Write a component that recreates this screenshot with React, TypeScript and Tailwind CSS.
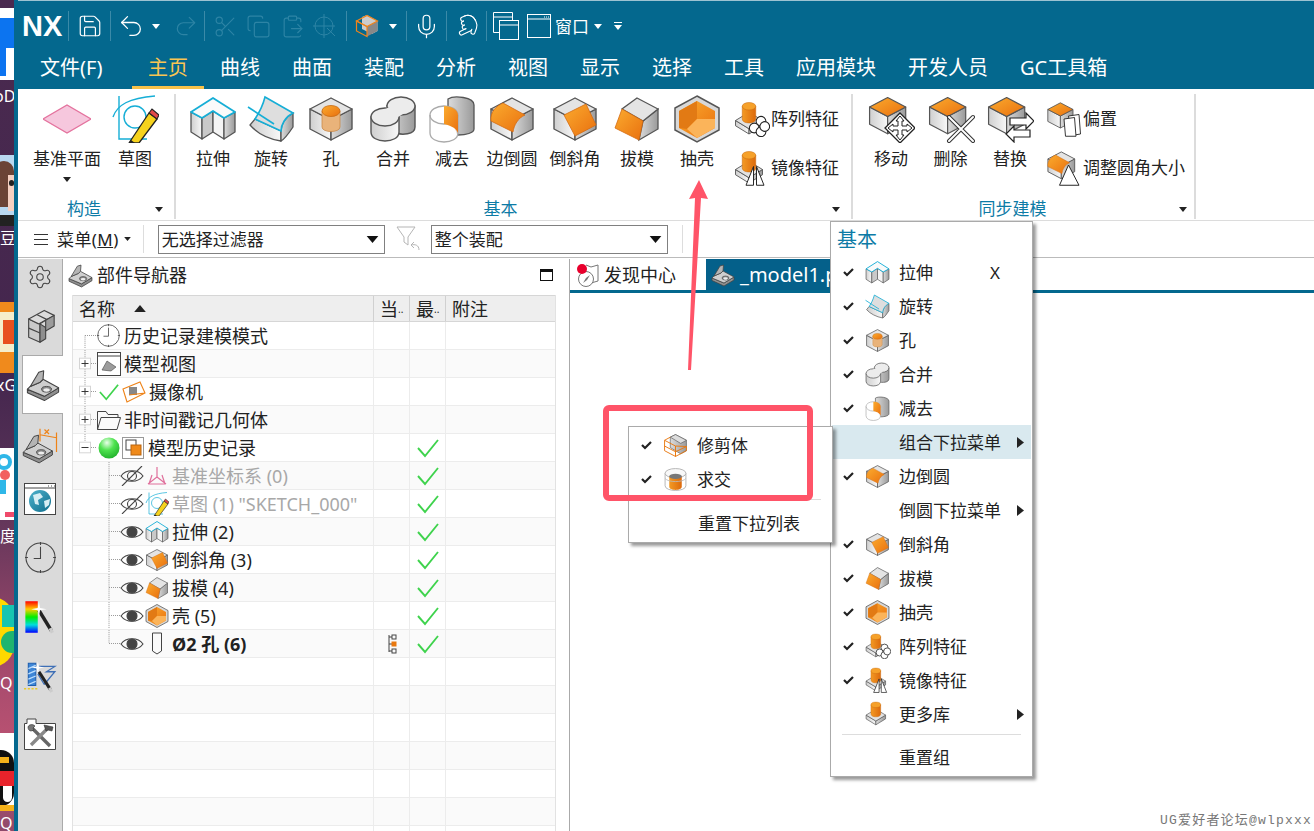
import React from 'react';
import { Settings, Save, Undo2, Redo2, Scissors, Copy, ClipboardPaste, Mic, Pointer } from 'lucide-react';

type P = { s?: number };
const O = '#555';
const Svg = ({ s = 48, children, w }: { s?: number; w?: number; children: React.ReactNode }) => (
  <svg width={w ?? s} height={s} viewBox="0 0 48 48" className="shrink-0">{children}</svg>
);

const Defs = () => (
  <svg className="absolute w-0 h-0">
    <defs>
      <linearGradient id="gl" x1="0" x2="1" y1="0" y2="0"><stop offset="0" stopColor="#cfcfcf" /><stop offset="1" stopColor="#f8f8f8" /></linearGradient>
      <linearGradient id="gr" x1="0" x2="1" y1="0" y2="0"><stop offset="0" stopColor="#dcdcdc" /><stop offset="1" stopColor="#9a9a9a" /></linearGradient>
      <linearGradient id="go" x1="0" x2="1" y1="0" y2="1"><stop offset="0" stopColor="#fbab2e" /><stop offset="1" stopColor="#e9700f" /></linearGradient>
      <linearGradient id="gc" x1="0" x2="1" y1="0" y2="0"><stop offset="0" stopColor="#f39a24" /><stop offset="1" stopColor="#dd6a0c" /></linearGradient>
      <radialGradient id="ball" cx="0.4" cy="0.25" r="0.8"><stop offset="0" stopColor="#e8ffe8" /><stop offset="0.45" stopColor="#4fe34f" /><stop offset="1" stopColor="#1fae2a" /></radialGradient>
      <linearGradient id="rb" x1="0" x2="0" y1="0" y2="1"><stop offset="0" stopColor="#f00" /><stop offset="0.25" stopColor="#fc0" /><stop offset="0.5" stopColor="#0e0" /><stop offset="0.75" stopColor="#0dd" /><stop offset="1" stopColor="#00f" /></linearGradient>
      <linearGradient id="gg" x1="0" x2="1" y1="0" y2="1"><stop offset="0" stopColor="#4fb2cc" /><stop offset="1" stopColor="#0e6d8c" /></linearGradient>
    </defs>
  </svg>
);

const Cube = ({ top = '#e4e4e4' }: { top?: string }) => (
  <g stroke={O} strokeWidth="1.4" strokeLinejoin="round">
    <polygon points="3,34 3,14 24,25 24,45" fill="url(#gl)" />
    <polygon points="45,34 45,14 24,25 24,45" fill="url(#gr)" />
    <polygon points="24,3 45,14 24,25 3,14" fill={top} />
  </g>
);
const Extrude = ({ s }: P) => (
  <Svg s={s}>
    <g stroke={O} strokeWidth="1.3" strokeLinejoin="round">
      <polygon points="2,17 13,23 13,44 2,37" fill="url(#gl)" />
      <polygon points="13,23 24,16 24,37 13,44" fill="#c9c9c9" />
      <polygon points="24,16 35,23 35,44 24,37" fill="#f4f4f4" />
      <polygon points="35,23 46,17 46,37 35,44" fill="url(#gr)" />
    </g>
    <polygon points="2,17 24,3 46,17 35,23 24,16 13,23" fill="#fafafa" stroke="#16aed6" strokeWidth="1.8" strokeLinejoin="round" />
  </Svg>
);
const Revolve = ({ s }: P) => (
  <Svg s={s}>
    <path d="M8 24 L34 36 L34 46 C22 44 10 38 3 30Z" fill="url(#gl)" stroke={O} strokeWidth="1.3" />
    <path d="M46 18 L46 32 C42 38 38 44 34 46 L34 36 C34 30 38 22 46 18Z" fill="url(#gr)" stroke={O} strokeWidth="1.3" />
    <path d="M18 2 L46 18 C38 22 34 30 34 36 L8 24 C12 18 16 10 18 2Z" fill="#dedede" stroke="#16aed6" strokeWidth="1.6" />
    <line x1="1" y1="12" x2="27" y2="29" stroke="#16aed6" strokeWidth="1.6" />
  </Svg>
);
const Hole = ({ s }: P) => (
  <Svg s={s}>
    <Cube />
    <path d="M15 16 L15 32 C15 38 33 38 33 32 L33 16Z" fill="#e9b37a" stroke="#c98a4a" strokeWidth="0.8" />
    <ellipse cx="24" cy="16" rx="9" ry="5.5" fill="url(#go)" stroke="#c86a10" strokeWidth="0.8" />
  </Svg>
);
const Unite = ({ s }: P) => (
  <Svg s={s}>
    <g stroke={O} strokeWidth="1.4">
      <path d="M18 11 L46 11 L46 32 C46 40 32 40 28 38Z" fill="url(#gr)" />
      <ellipse cx="32" cy="11" rx="14" ry="9" fill="#ececec" />
      <path d="M2 22 L2 37 C2 49 30 49 30 37 L30 22Z" fill="url(#gl)" />
      <ellipse cx="16" cy="22" rx="14" ry="9" fill="#ececec" />
    </g>
    <path d="M16 14 L28 9 L34 19 L29 22 L16 17Z" fill="#ececec" />
  </Svg>
);
const Subtract = ({ s }: P) => (
  <Svg s={s}>
    <path d="M20 12 L20 4 C26 0 46 2 46 10 L46 34 C46 38 38 40 30 40Z" fill="url(#gr)" stroke={O} strokeWidth="1.3" />
    <path d="M2 20 L2 38 C2 50 30 50 30 38 L30 20" fill="#fff" fillOpacity="0.75" stroke="#aaa" strokeWidth="1.3" />
    <ellipse cx="16" cy="20" rx="14" ry="9" fill="none" stroke="#aaa" strokeWidth="1.3" />
    <path d="M16 11 C24 11 30 15 30 20 L30 38 C28 32 20 30 16 29Z" fill="url(#go)" />
  </Svg>
);
const Blend = ({ s }: P) => (
  <Svg s={s}>
    <Cube />
    <path d="M3 26 C2 17 8 11 15 8 L37 20 C30 23 26 30 25 37Z" fill="url(#go)" stroke="#d46a10" strokeWidth="0.8" />
  </Svg>
);
const Chamfer = ({ s }: P) => (
  <Svg s={s}>
    <Cube />
    <polygon points="13,20 35,9 45,30 24,41" fill="url(#go)" stroke="#d46a10" strokeWidth="0.8" />
  </Svg>
);
const Draft = ({ s }: P) => (
  <Svg s={s}>
    <polygon points="45,14 45,34 26,45 30,26" fill="url(#gr)" stroke={O} strokeWidth="1.3" />
    <polygon points="24,3 45,14 30,26 9,14" fill="#e4e4e4" stroke={O} strokeWidth="1.3" />
    <polygon points="9,14 30,26 26,45 2,33" fill="url(#go)" stroke="#d46a10" strokeWidth="0.8" />
  </Svg>
);
const Shell = ({ s }: P) => (
  <Svg s={s}>
    <polygon points="24,1 46,13 46,35 24,47 2,35 2,13" fill="#d8d8d8" stroke={O} strokeWidth="1.5" />
    <polygon points="24,6 42,16 42,33 24,43 6,33 6,16" fill="url(#go)" />
    <polygon points="6,16 24,6 24,24 14,34 6,33" fill="#e27a14" />
    <polygon points="14,34 24,24 42,24 42,33 24,43" fill="#fbb45a" />
  </Svg>
);
const Base = () => (
  <g>
    <g stroke={O} strokeWidth="1.2" strokeLinejoin="round">
      <polygon points="2,26 2,33 20,44 20,37" fill="url(#gl)" />
      <polygon points="38,26 38,33 20,44 20,37" fill="url(#gr)" />
      <polygon points="2,26 20,15 38,26 20,37" fill="#e2e2e2" />
    </g>
    <path d="M11 7 L11 24 C11 31 29 31 29 24 L29 7Z" fill="url(#gc)" stroke="#c86a10" strokeWidth="0.7" />
    <ellipse cx="20" cy="7" rx="9" ry="5" fill="#f6a12a" stroke="#c86a10" strokeWidth="0.7" />
  </g>
);
const Library = ({ s }: P) => <Svg s={s}><Base /></Svg>;
const Pattern = ({ s }: P) => (
  <Svg s={s}>
    <Base />
    <g fill="#fff" stroke="#222" strokeWidth="1.4">
      <circle cx="36" cy="27" r="6.5" /><circle cx="27" cy="36" r="6.5" /><circle cx="45" cy="36" r="0" /><circle cx="36" cy="41" r="6.5" /><circle cx="41" cy="34" r="6.5" />
    </g>
  </Svg>
);
const Mirror = ({ s }: P) => (
  <Svg s={s}>
    <Base />
    <g fill="#fff" stroke="#222" strokeWidth="1.3" strokeLinejoin="round">
      <polygon points="26,22 16,47 26,47" /><polygon points="30,22 40,47 30,47" />
    </g>
  </Svg>
);
const MiniCube = () => (
  <g transform="scale(0.86)">
    <Cube top="url(#go)" />
  </g>
);
const MoveI = ({ s }: P) => (
  <Svg s={s}>
    <MiniCube />
    <polygon points="33,18 48,33 33,48 18,33" fill="#fff" stroke="#222" strokeWidth="1.3" />
    <path d="M33 21 L37 26 L35 26 L35 31 L40 31 L40 29 L45 33 L40 37 L40 35 L35 35 L35 40 L37 40 L33 45 L29 40 L31 40 L31 35 L26 35 L26 37 L21 33 L26 29 L26 31 L31 31 L31 26 L29 26Z" fill="#fff" stroke="#222" strokeWidth="1" />
  </Svg>
);
const DeleteI = ({ s }: P) => (
  <Svg s={s}>
    <MiniCube />
    <g strokeLinecap="round">
      <path d="M22 22 L46 46 M46 22 L22 46" stroke="#333" strokeWidth="4" />
      <path d="M22 22 L46 46 M46 22 L22 46" stroke="#fff" strokeWidth="2" />
    </g>
  </Svg>
);
const ReplaceI = ({ s }: P) => (
  <Svg s={s}>
    <MiniCube />
    <path d="M24 23 L40 23 L40 18 L48 26 L40 34 L40 30 L24 30Z" fill="#fff" stroke="#222" strokeWidth="1.2" />
    <path d="M44 35 L28 35 L28 31 L20 39 L28 47 L28 42 L44 42Z" fill="#fff" stroke="#222" strokeWidth="1.2" />
  </Svg>
);
const OffsetI = ({ s }: P) => (
  <Svg s={s}>
    <g transform="scale(0.8)"><Cube top="url(#go)" /></g>
    <path d="M30 20 L44 18 L46 44 L34 46Z" fill="#fff" stroke="#222" strokeWidth="1.2" />
    <path d="M24 24 L38 22 L40 47 L26 47Z" fill="#fff" stroke="#222" strokeWidth="1.2" />
  </Svg>
);
const Blend2 = () => (
  <g>
    <Cube />
    <path d="M3 26 C2 17 8 11 15 8 L37 20 C30 23 26 30 25 37Z" fill="url(#go)" stroke="#d46a10" strokeWidth="0.8" />
  </g>
);
const ResizeI = ({ s }: P) => (
  <Svg s={s}>
    <g transform="scale(0.85)"><Blend2 /></g>
    <polygon points="30,20 18,47 44,47" fill="#fff" stroke="#222" strokeWidth="1.3" strokeLinejoin="round" />
  </Svg>
);
const Trim = ({ s }: P) => (
  <Svg s={s}>
    <polygon points="14,16 14,8 24,3 45,14 45,34 34,40 14,28" fill="url(#gr)" stroke={O} strokeWidth="1.2" />
    <polygon points="14,8 24,3 45,14 34,20" fill="#ddd" stroke={O} strokeWidth="1.2" />
    <g fill="none" stroke="#e9780f" strokeWidth="1.8" strokeLinejoin="round">
      <polygon points="3,14 24,25 24,45 3,34" /><polygon points="24,25 45,26 45,34 24,45" /><line x1="3" y1="25" x2="24" y2="36" /><line x1="24" y1="36" x2="45" y2="26" /><line x1="3" y1="14" x2="14" y2="8" />
    </g>
  </Svg>
);
const Intersect = ({ s }: P) => (
  <Svg s={s}>
    <path d="M4 12 L4 36 C4 48 44 48 44 36 L44 12" fill="#fff" stroke="#aaa" strokeWidth="1.6" />
    <ellipse cx="24" cy="12" rx="20" ry="9" fill="#f8f8f8" stroke="#aaa" strokeWidth="1.6" />
    <path d="M12 18 L12 38 C12 46 36 46 36 38 L36 18Z" fill="url(#gc)" />
    <ellipse cx="24" cy="18" rx="12" ry="5" fill="#777" />
    <path d="M4 22 C10 30 38 30 44 22" fill="none" stroke="#bbb" strokeWidth="1.6" />
  </Svg>
);
const Datum = ({ s = 48 }: P) => (
  <Svg s={s}><polygon points="0,24 24,10 48,24 24,38" fill="#f6c7dd" stroke="#e4739e" strokeWidth="1.4" /></Svg>
);
const Sketch = ({ s = 48 }: P) => (
  <Svg s={s}>
    <g fill="none" stroke="#16aed6" strokeWidth="1.4">
      <path d="M2 22 C6 10 18 3 44 1" />
      <path d="M8 1 L8 44 L36 44" />
      <circle cx="24" cy="22" r="11" />
    </g>
    <path d="M20 45 L38 18 L46 24 L28 48 L18 48Z" fill="#f6d21d" stroke="#222" strokeWidth="1.3" strokeLinejoin="round" />
    <path d="M38 18 L41 14 L48 20 L46 24Z" fill="#e14a4a" stroke="#222" strokeWidth="1.1" />
    <path d="M20 45 L18 48 L24 48Z" fill="#222" />
  </Svg>
);
const BracketBody = () => (
  <g>
    <g stroke="#444" strokeWidth="1.5" strokeLinejoin="round">
      <polygon points="2,30 2,35 26,46 46,34 46,28 26,40" fill="#8f8f8f" />
      <polygon points="2,30 6,26 20,20 24,16 46,28 26,40" fill="#cfcfcf" />
      <polygon points="6,26 18,6 25,4 24,16 20,20" fill="#b4b4b4" />
    </g>
    <ellipse cx="29" cy="30" rx="7" ry="4" fill="#8a8a8a" stroke="#444" strokeWidth="1.2" />
    <ellipse cx="29" cy="31" rx="4.5" ry="2.4" fill="#eee" />
  </g>
);
const Bracket = ({ s = 48 }: P) => <Svg s={s}><BracketBody /></Svg>;
const DimBracket = ({ s = 36 }: P) => (
  <Svg s={s}>
    <g transform="translate(0,6) scale(0.88)"><BracketBody /></g>
    <g stroke="#ee8318" strokeWidth="1.6" fill="none">
      <path d="M24 1 L24 18 M46 6 L46 32 M24 9 L46 13" />
    </g>
    <path d="M30 2 L36 8 M36 2 L30 8" stroke="#ee8318" strokeWidth="1.6" />
  </Svg>
);
const Blocks = ({ s = 36 }: P) => (
  <Svg s={s}>
    <g stroke="#444" strokeWidth="1.6" strokeLinejoin="round">
      <polygon points="8,14 8,40 24,47 24,21" fill="#c9c9c9" />
      <polygon points="24,21 24,47 32,42 32,26" fill="#8f8f8f" />
      <polygon points="8,14 30,2 44,9 22,21" fill="#dcdcdc" />
      <polygon points="32,16 44,9 44,24 32,31" fill="#9b9b9b" />
      <path d="M8 27 L24 34 M20 8 L34 15 M24 21 L32 16" fill="none" />
    </g>
  </Svg>
);
const Clock = ({ s = 32, c = '#444' }: { s?: number; c?: string }) => (
  <svg width={s} height={s} viewBox="0 0 32 32" className="shrink-0" fill="none" stroke={c} strokeWidth="1.1">
    <circle cx="16" cy="16" r="15" />
    <path d="M16 5 L16 17 L9 17 M16 0 L16 3 M16 29 L16 32 M0 16 L3 16 M29 16 L32 16" />
  </svg>
);
const GlobeWin = ({ s = 32 }: P) => (
  <svg width={s} height={s} viewBox="0 0 32 32" className="shrink-0">
    <rect x="0.5" y="0.5" width="31" height="31" fill="#fff" stroke="#444" />
    <line x1="0" y1="5" x2="32" y2="5" stroke="#444" />
    <path d="M24 3 h1 M27 3 h1 M30 3 h1" stroke="#444" />
    <circle cx="16" cy="18" r="11" fill="url(#gg)" />
    <path d="M9 12 L16 10 L19 14 L14 17 L15 22 L11 21Z M20 18 L26 16 L25 22 L21 25Z" fill="#d7eef4" />
  </svg>
);
const WandRainbow = ({ s = 36 }: P) => (
  <svg width={s} height={s} viewBox="0 0 32 32" className="shrink-0">
    <rect x="3" y="2" width="11" height="28" fill="url(#rb)" />
    <path d="M15 10 L26 28" stroke="#222" strokeWidth="3" />
    <path d="M25 26 L27 30" stroke="#ccc" strokeWidth="3" />
    <path d="M15 2 L16 8 L22 9 L16 10 L15 16 L14 10 L8 9 L14 8Z" fill="#fff" />
  </svg>
);
const WandMill = ({ s = 36 }: P) => (
  <svg width={s} height={s} viewBox="0 0 32 32" className="shrink-0">
    <path d="M5 4 L12 4 L12 25 L5 25Z" fill="#3e86d6" stroke="#1f5fb0" />
    <path d="M5 9 L12 6 M5 14 L12 11 M5 19 L12 16 M5 24 L12 21" stroke="#bfe0ff" strokeWidth="1.2" />
    <path d="M13 7 L30 7 L22 12 L30 12 L20 24 M14 14 L20 24" fill="none" stroke="#3e6fb6" strokeWidth="1.2" />
    <path d="M1 28 L14 28" stroke="#e8c92a" strokeWidth="1.5" strokeDasharray="2 1.5" />
    <path d="M15 12 L26 29" stroke="#222" strokeWidth="3" />
    <path d="M25 27 L27 31" stroke="#ccc" strokeWidth="3" />
    <path d="M14 2 L15 7 L20 8 L15 9 L14 14 L13 9 L8 8 L13 7Z" fill="#fff" />
  </svg>
);
const Tools = ({ s = 34 }: P) => (
  <svg width={s} height={s} viewBox="0 0 32 32" className="shrink-0">
    <path d="M0.5 31.5 L0.5 5.5 L3 5.5 L3 1 L12 1 L12 5.5 L31.5 5.5 L31.5 31.5Z" fill="#fff" stroke="#444" />
    <path d="M7 9 L26 28" stroke="#666" strokeWidth="3.4" />
    <path d="M25 9 L7 27" stroke="#888" strokeWidth="3.4" />
    <path d="M4 9 C5 6 9 6 11 8 L9 10 L10 12 L7 13 C5 13 4 11 4 9Z" fill="#777" stroke="#333" strokeWidth="0.6" />
    <path d="M20 7 L29 9 L28 13 L24 12 L22 13Z" fill="#555" stroke="#333" strokeWidth="0.6" />
  </svg>
);
const Eye = ({ off = false }: { off?: boolean }) => (
  <svg width="24" height="20" viewBox="0 0 24 20" className="shrink-0" fill="none" stroke="#444" strokeWidth="1.1">
    <path d="M1 10 C6 3 18 3 23 10 C18 17 6 17 1 10Z" />
    {off ? <circle cx="12" cy="10" r="4.5" /> : <circle cx="12" cy="10" r="5" fill="#444" />}
    {off && <path d="M2 20 L22 0" />}
  </svg>
);
const GreenCheck = ({ s = 22 }: P) => (
  <svg width={s} height={s} viewBox="0 0 22 22" className="shrink-0" fill="none" stroke="#3fd34d" strokeWidth="1.9">
    <path d="M1 11 L8 19 L21 3" />
  </svg>
);
const TinyCheck = () => (
  <svg width="11" height="9" viewBox="0 0 11 9" className="shrink-0"><path d="M1 4 L4 7 L10 1" fill="none" stroke="#222" strokeWidth="2.2" /></svg>
);
const Tri = ({ w = 10, h = 6, c = '#222', cn = '' }: { w?: number; h?: number; c?: string; cn?: string }) => (
  <svg width={w} height={h} viewBox="0 0 10 6" className={`shrink-0 ${cn}`}><polygon points="0,0 10,0 5,6" fill={c} /></svg>
);
const RightTri = () => (
  <svg width="7" height="11" viewBox="0 0 7 11" className="shrink-0"><polygon points="0,0 7,5.5 0,11" fill="#222" /></svg>
);
const Win = ({ s = 24 }: P) => (
  <svg width={s} height={s} viewBox="0 0 24 24" className="shrink-0" fill="none" stroke="#fff" strokeWidth="1">
    <rect x="0.5" y="0.5" width="23" height="23" />
    <line x1="0" y1="5" x2="24" y2="5" />
    <path d="M17 3 h1 M19 3 h1 M21 3 h1" />
  </svg>
);
const TwoWin = () => (
  <svg width="26" height="28" viewBox="0 0 26 28" className="shrink-0" fill="none" stroke="#fff" strokeWidth="1">
    <path d="M13 20.5 H0.5 V0.5 H19.5 V8" />
    <line x1="0" y1="5" x2="20" y2="5" />
    <rect x="6.5" y="8.5" width="19" height="19" fill="#04688e" />
    <line x1="6" y1="13" x2="26" y2="13" />
  </svg>
);
const Sep = () => <div className="w-px h-[30px] bg-[#3b8aa8] shrink-0" />;

const tabs = ['曲线', '曲面', '装配', '分析', '视图', '显示', '选择', '工具', '应用模块', '开发人员', 'GC工具箱'];

const TitleBar = () => (
  <div className="h-[44px] flex items-center border-t border-[#9cc3d2] bg-[#04688e] text-white shrink-0 pt-[7px]">
    <div className="w-[50px] pl-[4px] font-bold text-[29px] leading-none [font-family:'Liberation_Sans',sans-serif]">NX</div>
    <Sep />
    <div className="w-[41px] flex justify-center"><Save size={26} strokeWidth={1.1} /></div>
    <Sep />
    <div className="w-[56px] pl-[6px] flex items-center gap-[7px]"><Undo2 size={28} strokeWidth={1.1} /><Tri w={8} h={5} c="#fff" /></div>
    <div className="w-[37px] flex justify-center text-[#2d84a5]"><Redo2 size={26} strokeWidth={1.1} /></div>
    <Sep />
    <div className="w-[141px] flex items-center justify-around text-[#2d84a5] px-[4px]">
      <Scissors size={25} strokeWidth={1.1} /><Copy size={25} strokeWidth={1.1} /><ClipboardPaste size={25} strokeWidth={1.1} />
      <svg width="25" height="25" viewBox="0 0 25 25" fill="none" stroke="#2d84a5"><circle cx="11" cy="12" r="9" /><path d="M11 0 V24 M0 12 H22 M14 14 L22 22" /></svg>
    </div>
    <Sep />
    <div className="w-[59px] pl-[8px] flex items-center gap-[10px]">
      <svg width="24" height="24" viewBox="0 0 48 48"><polygon points="14,6 24,2 45,14 45,34 34,40 14,30" fill="#ccc" /><polygon points="24,25 45,14 45,34 24,45" fill="#888" /><g fill="none" stroke="#f0841a" strokeWidth="2.4"><polygon points="3,14 24,3 45,14 24,25" /><polygon points="3,14 24,25 24,45 3,34" /></g></svg>
      <Tri w={8} h={5} c="#fff" />
    </div>
    <Sep />
    <div className="w-[39px] flex justify-center"><Mic size={27} strokeWidth={1.1} /></div>
    <Sep />
    <div className="w-[39px] flex justify-center"><Pointer size={24} strokeWidth={1.1} className="-rotate-[115deg]" /></div>
    <Sep />
    <div className="w-[40px] pl-[6px] flex items-center"><TwoWin /></div>
    <Win s={24} />
    <span className="ml-[4px] text-[17px] leading-none">窗口</span>
    <Tri w={8} h={5} c="#fff" cn="ml-[5px]" />
    <div className="ml-[12px] flex flex-col items-center gap-[2px]"><div className="w-[8px] h-px bg-white" /><Tri w={8} h={5} c="#fff" /></div>
  </div>
);

const MenuTabs = () => (
  <div className="h-[45px] flex bg-[#04688e] text-white text-[20px] shrink-0 pl-[22px]">
    <div className="w-[92px] flex items-center pt-[2px]">文件(F)</div>
    <div className="px-4 flex items-center text-[#f9c552] border-b-[3px] border-[#f9c24a] pt-[5px] mt-px">主页</div>
    {tabs.map((t) => <div key={t} className="px-4 flex items-center pt-[2px]">{t}</div>)}
  </div>
);

const BigBtn = ({ icon, label, w, arrow }: { icon: React.ReactNode; label: string; w: string; arrow?: boolean }) => (
  <div className={`flex flex-col items-center ${w}`}>
    <div className="h-[48px] flex items-center justify-center">{icon}</div>
    <div className="mt-[6px] text-[17px] leading-[20px] whitespace-nowrap">{label}</div>
    {arrow && <Tri w={8} h={5} c="#222" cn="mt-[8px]" />}
  </div>
);
const SmallBtn = ({ icon, label }: { icon: React.ReactNode; label: string }) => (
  <div className="flex items-center gap-[1px] h-[38px] whitespace-nowrap text-[17px] leading-[20px]">{icon}<span>{label}</span></div>
);
const GroupFoot = ({ label, cols, pl }: { label: string; cols: string; pl: string }) => (
  <div className={`grid ${cols} ${pl} items-center h-[20px]`}>
    <div className="text-center text-[#0d7ba6] text-[17px] leading-[20px]">{label}</div>
    <div className="flex justify-center"><Tri w={8} h={5} c="#222" /></div>
  </div>
);

const Ribbon = () => (
  <div className="h-[132px] flex bg-white text-[#222] pt-[5px] shrink-0 border-b border-[#dcdcdc]">
    <div className="w-[158px] h-[125px] flex flex-col justify-between border-r-2 border-[#dcdcdc]">
      <div className="flex pl-[15px] pt-[1px]">
        <BigBtn w="w-[68px]" icon={<Datum s={48} />} label="基准平面" arrow />
        <BigBtn w="w-[68px]" icon={<Sketch s={48} />} label="草图" />
      </div>
      <GroupFoot label="构造" cols="grid-cols-[1fr_30px]" pl="pl-[6px]" />
    </div>
    <div className="w-[677px] h-[125px] flex flex-col justify-between border-r-2 border-[#dcdcdc]">
      <div className="flex pl-[8px] pt-[1px]">
        <BigBtn w="w-[58px]" icon={<Extrude />} label="拉伸" />
        <BigBtn w="w-[58px]" icon={<Revolve />} label="旋转" />
        <BigBtn w="w-[62px]" icon={<Hole />} label="孔" />
        <BigBtn w="w-[62px]" icon={<Unite />} label="合并" />
        <BigBtn w="w-[56px]" icon={<Subtract />} label="减去" />
        <BigBtn w="w-[64px]" icon={<Blend />} label="边倒圆" />
        <BigBtn w="w-[62px]" icon={<Chamfer />} label="倒斜角" />
        <BigBtn w="w-[62px]" icon={<Draft />} label="拔模" />
        <BigBtn w="w-[58px]" icon={<Shell />} label="抽壳" />
        <div className="flex flex-col ml-[8px] pt-[5px] gap-[11px]">
          <SmallBtn icon={<Pattern s={36} />} label="阵列特征" />
          <SmallBtn icon={<Mirror s={36} />} label="镜像特征" />
        </div>
      </div>
      <GroupFoot label="基本" cols="grid-cols-[1fr_30px]" pl="pl-[4px]" />
    </div>
    <div className="w-[343px] h-[125px] flex flex-col justify-between border-r-2 border-[#dcdcdc]">
      <div className="flex pl-[8px] pt-[1px]">
        <BigBtn w="w-[60px]" icon={<MoveI />} label="移动" />
        <BigBtn w="w-[59px]" icon={<DeleteI />} label="删除" />
        <BigBtn w="w-[60px]" icon={<ReplaceI />} label="替换" />
        <div className="flex flex-col ml-[6px] pt-[5px] gap-[11px]">
          <SmallBtn icon={<OffsetI s={36} />} label="偏置" />
          <SmallBtn icon={<ResizeI s={36} />} label="调整圆角大小" />
        </div>
      </div>
      <GroupFoot label="同步建模" cols="grid-cols-[1fr_22px]" pl="" />
    </div>
  </div>
);

const Combo = ({ w, label }: { w: string; label: string }) => (
  <div className={`${w} h-[29px] border border-[#808080] flex items-center justify-between pl-[3px] pr-[5px] text-[17px] leading-none text-[#222] bg-white`}>
    <span>{label}</span><Tri w={13} h={7} c="#111" />
  </div>
);

const Toolbar = () => (
  <div className="h-[37px] flex items-center bg-white shrink-0 border-b border-[#bbb] text-[#222]">
    <div className="ml-[16px] w-[14px] flex flex-col gap-[4px]">
      <div className="h-px bg-[#333]" /><div className="h-px bg-[#333]" /><div className="h-px bg-[#333]" />
    </div>
    <span className="ml-[9px] text-[17px] leading-none whitespace-nowrap tracking-[0.4px]">菜单(<span className="underline">M</span>)</span>
    <Tri w={7} h={4} c="#222" cn="ml-[5px]" />
    <div className="ml-[12px] w-px h-[28px] bg-[#ddd]" />
    <div className="ml-[14px]"><Combo w="w-[227px]" label="无选择过滤器" /></div>
    <svg width="26" height="28" viewBox="0 0 26 28" fill="none" stroke="#b5b5b5" className="ml-[10px]">
      <path d="M2 2 L20 2 L13 12 L13 20 L9 17 L9 12Z" />
      <path d="M24 25 C24 20 20 19 16 20 M16 20 L19 17 M16 20 L19 23" />
    </svg>
    <div className="ml-[10px]"><Combo w="w-[237px]" label="整个装配" /></div>
    <div className="ml-[14px] w-px h-[28px] bg-[#ddd]" />
  </div>
);

const Side = () => (
  <div className="w-[45px] bg-[#dadada] border-r border-[#aaa] flex flex-col items-center shrink-0">
    <div className="h-[38px] flex items-center justify-center pb-[3px]"><Settings size={26} strokeWidth={1} className="text-[#444]" /></div>
    <div className="h-[58px] flex items-center justify-center"><Blocks s={34} /></div>
    <div className="h-[59px] w-[42px] ml-[4px] flex items-center justify-center bg-white border border-r-0 border-[#aaa] mr-[-1px]"><Bracket s={34} /></div>
    <div className="h-[64px] flex items-center justify-center"><DimBracket s={36} /></div>
    <div className="h-[42px] flex items-center justify-center"><GlobeWin s={32} /></div>
    <div className="h-[74px] flex items-center justify-center"><Clock s={31} /></div>
    <div className="h-[46px] flex items-center justify-center"><WandRainbow s={36} /></div>
    <div className="h-[72px] flex items-center justify-center"><WandMill s={34} /></div>
    <div className="h-[44px] flex items-center justify-center"><Tools s={32} /></div>
  </div>
);

const PlusBox = ({ minus, x }: { minus?: boolean; x: number }) => (
  <g>
    <rect x={x - 5.5} y="8.5" width="11" height="11" fill="#fff" stroke="#d4d4d4" />
    <path d={minus ? `M${x - 3.5} 14 H${x + 3.5}` : `M${x - 3.5} 14 H${x + 3.5} M${x} 10.5 V17.5`} stroke="#333" />
  </g>
);
const Gutter1 = ({ box, minus, first, last }: { box?: boolean; minus?: boolean; first?: boolean; last?: boolean }) => (
  <svg width="24" height="27" viewBox="0 0 24 28" className="shrink-0" preserveAspectRatio="none">
    <path d={`M12 ${first ? 14 : 0} V${last ? 8 : 28}`} stroke="#999" strokeDasharray="1 1" fill="none" />
    <path d="M12 14 H24" stroke="#999" strokeDasharray="1 1" fill="none" />
    {box && <PlusBox x={12} minus={minus} />}
  </svg>
);
const Gutter2 = ({ last }: { last?: boolean }) => (
  <svg width="47" height="27" viewBox="0 0 47 28" className="shrink-0" preserveAspectRatio="none">
    <path d={`M36 0 V${last ? 14 : 28} M36 14 H47`} stroke="#999" strokeDasharray="1 1" fill="none" />
  </svg>
);

const Mat = () => (
  <svg width="24" height="24" viewBox="0 0 24 24" className="shrink-0">
    <rect x="1.5" y="1.5" width="21" height="21" fill="#fff" stroke="#999" />
    <rect x="5" y="4" width="10" height="10" fill="#fff" stroke="#444" />
    <rect x="10" y="9" width="10" height="10" fill="#f08a1a" stroke="#b9650f" />
  </svg>
);
const Cam = () => (
  <svg width="24" height="24" viewBox="0 0 24 24" className="shrink-0">
    <rect x="7" y="7" width="8" height="8" fill="#888" />
    <path d="M1 9 L18 2 L23 13 L5 22Z M1 9 L5 22 M7 15 L23 13" fill="none" stroke="#ee8318" strokeWidth="1.1" />
  </svg>
);
const ViewWin = () => (
  <svg width="24" height="24" viewBox="0 0 24 24" className="shrink-0">
    <rect x="0.5" y="0.5" width="23" height="23" fill="#fff" stroke="#444" />
    <line x1="0" y1="4" x2="24" y2="4" stroke="#444" />
    <path d="M5 18 L10 9 L13 11 L19 15 L14 19Z" fill="#9c9c9c" stroke="#444" strokeWidth="0.6" />
  </svg>
);
const Folder = () => (
  <svg width="24" height="20" viewBox="0 0 24 20" className="shrink-0" fill="none" stroke="#444">
    <path d="M0.5 19.5 L0.5 1.5 L9 1.5 L11 4.5 L21 4.5 L21 7.5 M0.5 19.5 L4 7.5 L23.5 7.5 L20 19.5Z" />
  </svg>
);
const Ball = () => <svg width="22" height="22" viewBox="0 0 22 22" className="shrink-0"><circle cx="11" cy="11" r="10.5" fill="url(#ball)" /></svg>;
const Csys = () => (
  <svg width="22" height="22" viewBox="0 0 22 22" className="shrink-0" fill="none" stroke="#e0709c" strokeWidth="1.2">
    <path d="M11 2 V12 L2 19 M11 12 L20 19 M6 10 L3 19 L19 19 L16 10" />
  </svg>
);
const Cone = () => (
  <svg width="22" height="24" viewBox="0 0 22 24" className="shrink-0" fill="none" stroke="#444"><path d="M6.5 1 H15.5 V19 L11 22 L6.5 19Z" /></svg>
);

const Row = ({ children, alt, check, tree }: { children?: React.ReactNode; alt?: boolean; check?: boolean; tree?: boolean }) => (
  <div className={`h-[28px] flex border-b border-[#ececec] shrink-0 ${alt ? 'bg-[#fafafa]' : 'bg-white'}`}>
    <div className="w-[300px] flex items-center text-[18px] leading-none whitespace-nowrap text-[#222] overflow-hidden">{children}</div>
    <div className="w-[36px] border-l border-[#ececec] flex items-center justify-center">
      {tree && (
        <svg width="10" height="20" viewBox="0 0 10 20"><g fill="none" stroke="#444"><rect x="5" y="1" width="4" height="4" /><rect x="5" y="15" width="4" height="4" /><path d="M2 1 V18 M2 3 H5 M2 10 H5 M2 17 H5" /></g><rect x="4.5" y="7.5" width="5" height="5" fill="#e9780f" /></svg>
      )}
    </div>
    <div className="w-[36px] border-l border-[#ececec] flex items-center justify-center">{check && <GreenCheck />}</div>
    <div className="flex-1 border-l border-[#ececec]" />
  </div>
);

const Feature = ({ icon, label, dim, bold, last, off, alt, check, tree }: { icon: React.ReactNode; label: string; dim?: boolean; bold?: boolean; last?: boolean; off?: boolean; alt?: boolean; check?: boolean; tree?: boolean }) => (
  <Row alt={alt} check={check} tree={tree}>
    <Gutter2 last={last} />
    <Eye off={off} />
    <span className="w-[25px] flex justify-center shrink-0">{icon}</span>
    <span className={`ml-[3px] ${dim ? 'text-[#a8a8a8]' : ''} ${bold ? 'font-bold' : ''}`}>{label}</span>
  </Row>
);

const NavPanel = () => (
  <div className="w-[507px] border-r border-[#aaa] bg-white flex flex-col shrink-0 overflow-hidden">
    <div className="h-[36px] pl-[5px] pr-[16px] pb-[4px] flex items-center">
      <Bracket s={25} />
      <span className="ml-[4px] text-[18px] leading-none text-[#222]">部件导航器</span>
      <div className="ml-auto w-[13px] h-[12px] border border-[#111] border-t-[3px]" />
    </div>
    <div className="ml-[9px] mr-[13px] border-l border-r border-[#e2e2e2] flex-1 min-h-0">
      <div className="h-[27px] flex bg-[#eee] text-[18px] leading-none text-[#222] border-t border-b border-[#d6d6d6]">
        <div className="w-[300px] flex items-center pl-[6px]">名称<Tri w={12} h={7} c="#222" cn="ml-[19px] rotate-180" /></div>
        <div className="w-[36px] border-l border-[#d0d0d0] flex items-center pl-[6px] whitespace-nowrap overflow-hidden">当<span className="text-[10px] self-end pb-[7px]">..</span></div>
        <div className="w-[36px] border-l border-[#d0d0d0] flex items-center pl-[6px] whitespace-nowrap overflow-hidden">最<span className="text-[10px] self-end pb-[7px]">..</span></div>
        <div className="flex-1 border-l border-[#d0d0d0] flex items-center pl-[6px]">附注</div>
      </div>
      <Row><Gutter1 first /><Clock s={23} /><span className="ml-[4px]">历史记录建模模式</span></Row>
      <Row alt><Gutter1 box /><ViewWin /><span className="ml-[3px]">模型视图</span></Row>
      <Row><Gutter1 box /><span className="ml-[2px]"><GreenCheck s={20} /></span><span className="ml-[3px]"><Cam /></span><span className="ml-[3px]">摄像机</span></Row>
      <Row alt><Gutter1 box /><Folder /><span className="ml-[3px]">非时间戳记几何体</span></Row>
      <Row check><Gutter1 box minus last /><span className="ml-[1px]"><Ball /></span><span className="ml-[1px]"><Mat /></span><span className="ml-[3px]">模型历史记录</span></Row>
      <Feature alt check off dim icon={<Csys />} label="基准坐标系 (0)" />
      <Feature check off dim icon={<Sketch s={24} />} label={'草图 (1) "SKETCH_000"'} />
      <Feature alt check icon={<Extrude s={24} />} label="拉伸 (2)" />
      <Feature check icon={<Chamfer s={24} />} label="倒斜角 (3)" />
      <Feature alt check icon={<Draft s={24} />} label="拔模 (4)" />
      <Feature check icon={<Shell s={24} />} label="壳 (5)" />
      <Feature alt check tree last bold icon={<Cone />} label="Ø2 孔 (6)" />
      <Row /><Row alt /><Row /><Row alt /><Row /><Row alt /><Row />
    </div>
  </div>
);

const Canvas = () => (
  <div className="flex-1 bg-white flex flex-col min-w-0">
    <div className="h-[34px] flex border-b-[3px] border-[#04688e]">
      <div className="w-[136px] flex items-center pl-[6px] text-[18px] leading-none text-[#222]">
        <svg width="24" height="24" viewBox="0 0 24 24" className="shrink-0">
          <path d="M10 2 L15 4 L22 2 L22 18 L15 20" fill="#fff" stroke="#777" />
          <circle cx="10" cy="16" r="7.5" fill="#fff" stroke="#777" /><path d="M7 20 L10 15 L14 12 L11 17Z" fill="#777" />
          <circle cx="6" cy="6" r="5" fill="#e8002d" />
        </svg>
        <span className="ml-[4px]">发现中心</span>
      </div>
      <div className="w-[124px] flex items-center pl-[5px] bg-[#04608a] text-white text-[20px] leading-none whitespace-nowrap overflow-hidden">
        <Bracket s={24} /><span className="ml-[5px]">_model1.prt</span>
      </div>
    </div>
  </div>
);

const MenuItem = ({ icon, label, check, hl, sub, sc }: { icon?: React.ReactNode; label: string; check?: boolean; hl?: boolean; sub?: boolean; sc?: string }) => (
  <div className={`h-[34px] flex items-center pl-[11px] pr-[7px] mx-px text-[17px] leading-none text-[#222] ${hl ? 'bg-[#d9e9ef]' : ''}`}>
    <span className="w-[11px] flex">{check && <TinyCheck />}</span>
    <span className="ml-[11px] w-[25px] h-[25px] flex items-center justify-center">{icon}</span>
    <span className="ml-[9px] whitespace-nowrap">{label}</span>
    {sc && <span className="ml-[57px] text-[17px]">{sc}</span>}
    {sub && <span className="ml-auto"><RightTri /></span>}
  </div>
);

const MainMenu = () => (
  <div className="absolute left-[830px] top-[221px] w-[203px] h-[556px] bg-white border border-[#aaa] shadow-[3px_3px_3px_rgba(0,0,0,0.4)] z-10">
    <div className="h-[33px] pt-[3px] pl-[6px] flex items-center text-[#0d7ba6] text-[20px] leading-none">基本</div>
    <MenuItem check icon={<Extrude s={25} />} label="拉伸" sc="X" />
    <MenuItem check icon={<Revolve s={25} />} label="旋转" />
    <MenuItem check icon={<Hole s={25} />} label="孔" />
    <MenuItem check icon={<Unite s={25} />} label="合并" />
    <MenuItem check icon={<Subtract s={25} />} label="减去" />
    <MenuItem hl label="组合下拉菜单" sub />
    <MenuItem check icon={<Blend s={25} />} label="边倒圆" />
    <MenuItem label="倒圆下拉菜单" sub />
    <MenuItem check icon={<Chamfer s={25} />} label="倒斜角" />
    <MenuItem check icon={<Draft s={25} />} label="拔模" />
    <MenuItem check icon={<Shell s={25} />} label="抽壳" />
    <MenuItem check icon={<Pattern s={26} />} label="阵列特征" />
    <MenuItem check icon={<Mirror s={26} />} label="镜像特征" />
    <MenuItem icon={<Library s={26} />} label="更多库" sub />
    <div className="mx-[11px] mt-[3px] h-px bg-[#ddd]" />
    <div className="h-[44px] pl-[68px] flex items-center text-[17px] leading-none text-[#222]">重置组</div>
  </div>
);

const Flyout = () => (
  <div className="absolute left-[628px] top-[426px] w-[205px] h-[117px] bg-white border border-[#aaa] shadow-[3px_3px_3px_rgba(0,0,0,0.4)] pt-[1px] z-20">
    <MenuItem check icon={<Trim s={25} />} label="修剪体" />
    <MenuItem check icon={<Intersect s={25} />} label="求交" />
    <div className="mx-[11px] mt-[3px] h-px bg-[#ddd]" />
    <div className="h-[46px] pl-[69px] flex items-center text-[17px] leading-none text-[#222]">重置下拉列表</div>
  </div>
);

const Desktop = () => (
  <div className="w-[14px] h-full overflow-hidden shrink-0 flex flex-col bg-[linear-gradient(180deg,#4a2a4f_0%,#44264e_45%,#5a3358_60%,#a94c6e_82%,#bb5272_90%,#8f4a6a_100%)] text-white text-[16px] leading-[20px]">
    <div className="h-[8px] shrink-0" />
    <div className="h-[72px] shrink-0 bg-white relative overflow-hidden">
      <div className="absolute left-0 top-[10px] w-[14px] h-[30px] bg-[#0c74f0]" />
      <div className="absolute left-0 top-[40px] w-[6px] h-[28px] bg-[#0c74f0]" />
    </div>
    <div className="h-[75px] shrink-0 whitespace-nowrap pt-[6px] -ml-[6px]">oD</div>
    <div className="h-[71px] shrink-0 bg-[#b9d8f0] relative overflow-hidden">
      <div className="absolute -left-[6px] top-[6px] w-[20px] h-[46px] bg-[#6b4335] rounded-t-full" />
      <div className="absolute left-[8px] top-[20px] w-[6px] h-[36px] bg-[#f4cfc0]" />
      <div className="absolute left-[9px] top-[25px] w-[5px] h-[6px] bg-[#222] rounded-full" />
      <div className="absolute left-0 top-[60px] w-[14px] h-[11px] bg-[#222]" />
    </div>
    <div className="h-[76px] shrink-0 whitespace-nowrap pt-[2px]">豆</div>
    <div className="h-[71px] shrink-0 bg-[#f08a1c] relative overflow-hidden">
      <div className="absolute left-0 top-[10px] w-[14px] h-[40px] bg-[#f5eecb]" />
      <div className="absolute left-[3px] top-[18px] w-[11px] h-[24px] bg-[#e8501e]" />
    </div>
    <div className="h-[75px] shrink-0 whitespace-nowrap pt-[2px] -ml-[4px]">xG</div>
    <div className="h-[72px] shrink-0 bg-white relative overflow-hidden">
      <div className="absolute -left-[4px] top-[6px] w-[16px] h-[16px] rounded-full border-[4px] border-[#2fb7e8]" />
      <div className="absolute left-0 top-[22px] w-[10px] h-[10px] rounded-full bg-[#f2605f]" />
      <div className="absolute left-0 top-[32px] w-[6px] h-[14px] bg-[#2fb7e8]" />
      <div className="absolute left-[5px] top-[64px] w-[9px] h-[5px] bg-[#ef4a6b]" />
    </div>
    <div className="h-[77px] shrink-0 whitespace-nowrap pt-[6px]">度</div>
    <div className="h-[70px] shrink-0 relative overflow-hidden">
      <div className="absolute -left-[30px] top-0 w-[44px] h-[70px] rounded-r-[22px] bg-[#ffd800]" />
      <div className="absolute left-[2px] top-[8px] w-[12px] h-[22px] bg-[#17c5b0]" />
      <div className="absolute left-[1px] top-[34px] w-[13px] h-[22px] rounded-l-full bg-[#1fb56f]" />
    </div>
    <div className="h-[66px] shrink-0 whitespace-nowrap pt-[6px]">Q</div>
    <div className="h-[78px] shrink-0 bg-white relative overflow-hidden">
      <div className="absolute -left-[12px] top-[17px] w-[26px] h-[56px] rounded-[13px] bg-[#111]" />
      <div className="absolute left-0 top-[24px] w-[9px] h-[6px] bg-[#f5b21a]" />
      <div className="absolute left-0 top-[38px] w-[14px] h-[15px] bg-[#e8232b]" />
      <div className="absolute left-[3px] top-[53px] w-[9px] h-[16px] bg-white rounded-b-lg" />
      <div className="absolute left-0 top-[72px] w-[14px] h-[6px] bg-[#f5b21a]" />
    </div>
    <div className="whitespace-nowrap pt-[2px]">Q</div>
  </div>
);

const Annotations = () => (
  <>
    <div className="absolute left-[603px] top-[405px] w-[210px] h-[96px] border-[6px] border-[#ff5468] rounded-[6px] z-30" />
    <svg width="40" height="200" viewBox="0 0 40 200" className="absolute left-[670px] top-[178px] z-30">
      <polygon points="29,2 38,21 31,20 21,192 18,192 25,20 19,21" fill="#ff5468" />
    </svg>
    <div className="absolute right-[2px] bottom-[3px] z-30 text-[13px] leading-[15px] tracking-[1.2px] text-[#777] [font-family:'Liberation_Mono','Noto_Sans_CJK_SC',monospace]">UG爱好者论坛@wlpxxx</div>
  </>
);

export default function App() {
  return (
    <div className="relative w-[1314px] h-[831px] overflow-hidden flex bg-white [font-family:'Noto_Sans','Noto_Sans_CJK_SC',sans-serif]">
      <Defs />
      <Desktop />
      <div className="flex-1 min-w-0 flex flex-col border-l-4 border-[#04688e]">
        <TitleBar />
        <MenuTabs />
        <Ribbon />
        <Toolbar />
        <div className="flex-1 flex min-h-0 pt-px">
          <Side />
          <NavPanel />
          <Canvas />
        </div>
      </div>
      <MainMenu />
      <Flyout />
      <Annotations />
    </div>
  );
}
